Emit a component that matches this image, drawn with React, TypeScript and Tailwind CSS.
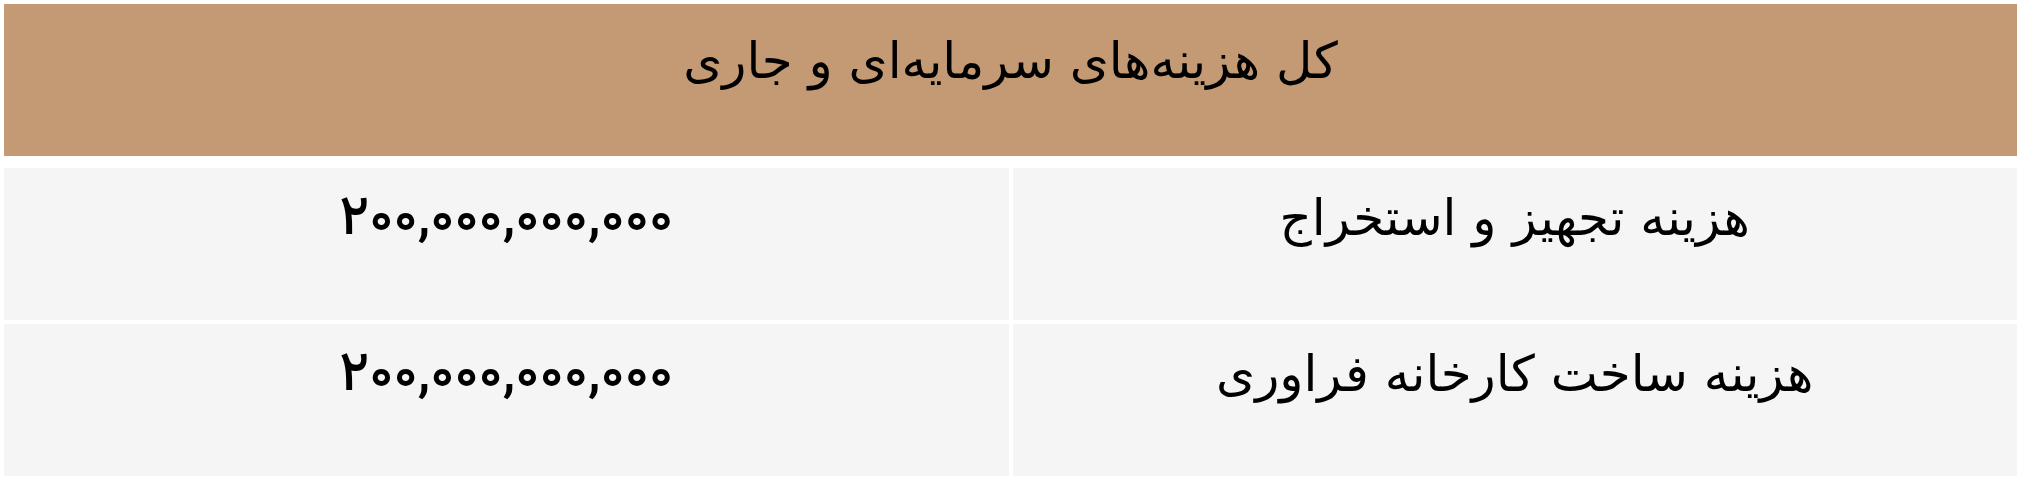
export default function App() {
  const rows = [
    { label: "هزینه تجهیز و استخراج", value: "۲۰۰,۰۰۰,۰۰۰,۰۰۰" },
    { label: "هزینه ساخت کارخانه فراوری", value: "۲۰۰,۰۰۰,۰۰۰,۰۰۰" },
  ];
  return (
    <div
      dir="rtl"
      className="w-[2021px] h-[480px] bg-white p-1 text-black"
      style={{ fontFamily: '"DejaVu Sans", sans-serif' }}
    >
      <div className="h-[152px] bg-[#c49a74] flex justify-center pt-[27px] text-[50px] leading-[60px]">
        کل هزینه‌های سرمایه‌ای و جاری
      </div>
      <div className="mt-3 grid grid-cols-2 gap-1">
        {rows.map((r, i) => (
          <div key={i} className="contents">
            <div className="h-[152px] bg-[#f5f5f5] flex justify-center pt-[20px] text-[50px] leading-[60px]">
              {r.label}
            </div>
            <div
              className="h-[152px] bg-[#f5f5f5] flex justify-center pt-[23px] text-[56px] leading-[60px] font-medium"
              style={{ fontFamily: 'Vazirmatn, "DejaVu Sans", sans-serif' }}
            >
              <span dir="ltr">{r.value}</span>
            </div>
          </div>
        ))}
      </div>
    </div>
  );
}
